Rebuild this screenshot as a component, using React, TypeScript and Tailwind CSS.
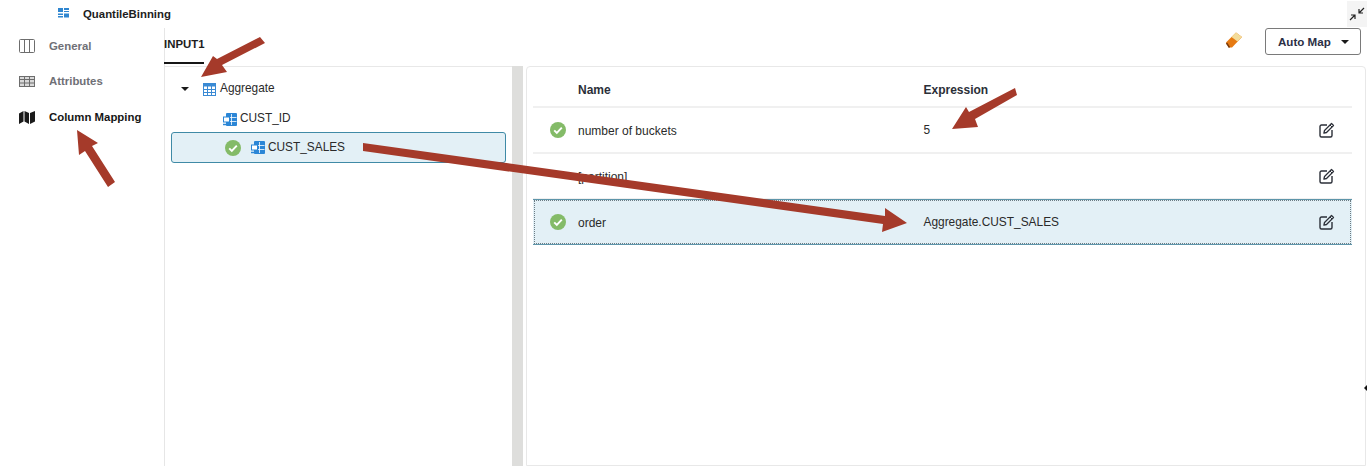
import React from 'react';

const font = { fontFamily: '"Liberation Sans", Arial, sans-serif' };

function Check() {
  return (
    <svg width="16" height="16" viewBox="0 0 16 16" className="shrink-0">
      <circle cx="8" cy="8" r="8" fill="#84bb68" />
      <path d="M4.2 8.4l2.6 2.6 5-5.4" fill="none" stroke="#fff" strokeWidth="1.9" />
    </svg>
  );
}

function ColumnIcon() {
  return (
    <svg width="14" height="13" viewBox="0 0 14 13" className="shrink-0">
      <rect x="3" y="0" width="11" height="13" rx="1" fill="#2b86d6" />
      <path d="M8.500 1v11M4 4.500h9.500M4 8.500h9.500" stroke="#fff" strokeWidth="0.8" />
      <rect x="0.500" y="4" width="6" height="5" fill="#fff" stroke="#2b86d6" />
      <path d="M0 11.500h4" stroke="#2b86d6" strokeWidth="1.500" />
    </svg>
  );
}

function TableIcon() {
  return (
    <svg width="13" height="13" viewBox="0 0 13 13" className="shrink-0">
      <rect x="0.5" y="0.5" width="12" height="12" fill="#fff" stroke="#3a8ad4" />
      <rect x="0.5" y="0.5" width="12" height="3" fill="#3a8ad4" />
      <path d="M4.5 1v11M8.5 1v11M1 6.5h11M1 9.5h11" stroke="#3a8ad4" strokeWidth="1" />
    </svg>
  );
}

function EditIcon() {
  return (
    <svg width="16" height="16" viewBox="0 0 16 16" fill="none" className="shrink-0">
      <path d="M8 3H2.5A1.5 1.5 0 0 0 1 4.5v9A1.5 1.5 0 0 0 2.5 15h9a1.5 1.5 0 0 0 1.5-1.5V8" stroke="#2b2f38" strokeWidth="1.4" />
      <path d="M5.5 8.5L12.5 1.5l2 2-7 7-2.6.6z" stroke="#2b2f38" strokeWidth="1.3" strokeLinejoin="round" />
      <path d="M11 3l2 2" stroke="#2b2f38" strokeWidth="1" />
    </svg>
  );
}

function Caret({ className }: { className: string }) {
  return <span className={`w-0 h-0 border-x-[4px] border-x-transparent border-t-[4px] border-t-[#1a1a1a] ${className}`} />;
}

function SideItem({ label, active, icon }: { label: string; active?: boolean; icon: React.ReactNode }) {
  return (
    <div className="flex items-center h-[35.5px] pl-[19px]">
      <span className="w-[30px] flex">{icon}</span>
      <span className={`text-[11.4px] font-bold ${active ? 'text-[#161616]' : 'text-[#6f7076]'}`}>{label}</span>
    </div>
  );
}

function Row({
  name,
  expr,
  ok,
  selected,
}: {
  name: string;
  expr?: string;
  ok?: boolean;
  selected?: boolean;
}) {
  return (
    <div
      className={`flex items-center text-[#2a2a2a] ${
        selected
          ? '-mt-px h-[46px] bg-[#e3f0f6] border-y border-[#5d95aa] outline outline-dotted -outline-offset-2 outline-[#6c7c84]'
          : 'h-[46px] border-b-2 border-[#f0f0f0]'
      }`}
    >
      <span className="w-[45px] pl-[17px] flex">{ok && <Check />}</span>
      <span className="w-[345.5px] text-[12px] pt-px">{name}</span>
      <span className="flex-1 text-[11.9px] pt-px">{expr}</span>
      <span className="w-[33px] flex"><EditIcon /></span>
    </div>
  );
}

export default function App() {
  return (
    <div className="relative w-[1367px] h-[466px] overflow-hidden bg-white flex flex-col" style={font}>
      <div className="h-[28px] flex items-center pl-[58px] shrink-0 relative">
        <svg width="11" height="10" viewBox="0 0 11 10" className="mb-[3px]">
          <path d="M0 0h5v4H0zM6 0h5v2H6zM6 3h5v1H6zM0 5.500h5v1.500H0zM0 8h5v1.500H0zM6 5.500h5v4H6z" fill="#2f86d0" />
        </svg>
        <span className="ml-[14px] text-[11.4px] font-bold text-[#1d1d1d] mt-px">QuantileBinning</span>
        <div className="absolute right-0 top-[1px] w-[20px] h-[26px] bg-[#f4f4f4] flex items-center justify-center">
          <svg width="18" height="16" viewBox="0 0 18 16" fill="none" stroke="#222" strokeWidth="1.2">
            <path d="M2 14l5-5M3 9h4v4M16 2l-5 5M11 3v4h4" />
          </svg>
        </div>
      </div>

      <div className="flex flex-1 min-h-0">
        <aside className="w-[165px] shrink-0 border-r border-[#e6e6e6] pt-[0.5px]">
          <SideItem
            label="General"
            icon={
              <svg width="16" height="14" viewBox="0 0 16 14" fill="none" stroke="#6d6d6d">
                <rect x="0.5" y="0.5" width="15" height="13" rx="1" />
                <path d="M5.500 1v12M10.500 1v12" />
              </svg>
            }
          />
          <SideItem
            label="Attributes"
            icon={
              <svg width="16" height="11" viewBox="0 0 16 11" fill="none" stroke="#6d6d6d">
                <rect x="0.5" y="0.5" width="15" height="10" fill="#d9d9d9" />
                <path d="M0 3.500h16M0 7h16M5.500 0v11M10.500 0v11" />
              </svg>
            }
          />
          <SideItem
            label="Column Mapping"
            active
            icon={
              <svg width="16" height="13" viewBox="0 0 16 13" fill="#1b1b1b">
                <path d="M0 2.500L4.500 0v10.500L0 13zM5.500 0L10 2v11l-4.500-2.500zM11 2l5-2v10.500L11 13z" />
              </svg>
            }
          />
        </aside>

        <main className="flex-1 min-w-0 flex flex-col">
          <div className="h-[38px] shrink-0 flex items-start">
            <div className="h-[36px] w-[40px] -ml-px border-b-[2px] border-[#161616] pt-[8px] text-[11.4px] font-bold text-[#1d1d1d]">INPUT1</div>
            <div className="ml-auto mr-[6px] flex items-center">
              <svg width="18" height="18" viewBox="0 0 18 18" className="mr-[22px] mb-[3px]">
                <path d="M1 11.500L11 1.500l6 4.500-10 10.500H4z" fill="#e67a12" />
                <path d="M6.500 6L11 1.500l6 4.500-4.500 4.500z" fill="#f3dc9a" />
                <path d="M1.500 12l3 4.500" stroke="#7b3a08" strokeWidth="1.500" />
              </svg>
              <button className="w-[96px] h-[27px] border border-[#7a7a7a] rounded-[3px] flex items-center pl-[12px] text-[11.6px] font-bold text-[#2b2f45] bg-white">
                Auto Map
                <Caret className="ml-[10px]" />
              </button>
            </div>
          </div>

          <div className="flex flex-1 min-h-0">
            <section className="w-[347px] shrink-0 border-t border-[#e8e8e8] pl-[6px] pr-[6px] text-[11.85px] text-[#2a2a2a]">
              <div className="h-[44px] flex items-center pl-[10px]">
                <Caret className="mr-[14px]" />
                <TableIcon />
                <span className="ml-[4px]">Aggregate</span>
              </div>
              <div className="h-[22px] flex items-center pl-[52px] -mt-[3px]">
                <ColumnIcon />
                <span className="ml-[3px]">CUST_ID</span>
              </div>
              <div className="h-[31px] mt-[2px] flex items-center pl-[53px] bg-[#e3f0f6] border border-[#3f8aa6] rounded-[3px]">
                <Check />
                <span className="ml-[10px] flex"><ColumnIcon /></span>
                <span className="ml-[3px]">CUST_SALES</span>
              </div>
            </section>

            <div className="w-[11px] shrink-0 bg-[#dededc] mr-[3px]" />

            <section className="w-[840px] shrink-0 border border-[#e8e8e8] rounded-t-[4px] pl-[6px] pr-[13px] pb-0">
              <div className="flex items-center h-[41px] pt-[6px] border-b-2 border-[#f0f0f0] text-[12px] font-bold text-[#2b2f38]">
                <span className="w-[45px]" />
                <span className="w-[345.5px]">Name</span>
                <span>Expression</span>
              </div>
              <Row name="number of buckets" expr="5" ok />
              <Row name="[partition]" />
              <Row name="order" expr="Aggregate.CUST_SALES" ok selected />
            </section>
          </div>
        </main>
      </div>

      {/* red annotation arrows drawn over the screenshot */}
      <svg className="absolute inset-0 pointer-events-none" width="1367" height="466" viewBox="0 0 1367 466">
        <g fill="#a53a2a">
          <path d="M260 37L265 43L222 65L227 72L201 77L213 56L217 59Z" />
          <path d="M108 187L115 182L92 146L98 143L77 130L79 155L85 151Z" />
          <path d="M1015 88L1017 95L975 119L978 127L952 129L966 107L969 112Z" />
          <path d="M363 143L363 151L883 224L882 232L907 223L885 208L885 216Z" />
        </g>
        <path d="M1364 388l3-3v6z" fill="#111" />
      </svg>
    </div>
  );
}
